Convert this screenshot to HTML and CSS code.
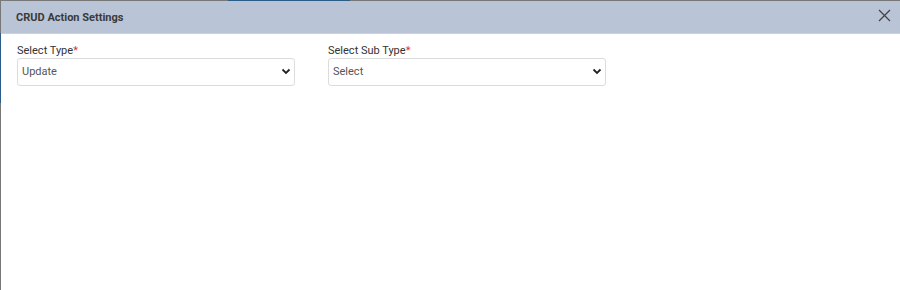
FILE: index.html
```html
<!DOCTYPE html>
<html lang="en">
<head>
  <meta charset="UTF-8">
  <meta name="viewport" content="width=device-width, initial-scale=1.0">
  <title>CRUD Action Settings</title>
  <link rel="stylesheet" href="styles.css">
</head>
<body>
  <!-- page behind the modal -->
  <div class="backdrop">
    <div class="tab-active"></div>
    <div class="side-active"></div>
  </div>

  <div id="modal">
    <div id="modal-header">
      <h1>CRUD Action Settings</h1>
      <button class="close" aria-label="Close">
        <svg width="13" height="13" viewBox="0 0 13 13">
          <path d="M1 1 L12 12 M12 1 L1 12" stroke="#444" stroke-width="1.3" fill="none"/>
        </svg>
      </button>
    </div>
    <div id="modal-body">
      <div class="field">
        <label>Select Type<span class="req">*</span></label>
        <div class="select">
          <span>Update</span>
          <svg width="10" height="7" viewBox="0 0 10 7"><path d="M1.5 1.5 L5 5 L8.5 1.5" stroke="#222" stroke-width="1.8" fill="none"/></svg>
        </div>
      </div>
      <div class="field">
        <label>Select Sub Type<span class="req">*</span></label>
        <div class="select">
          <span>Select</span>
          <svg width="10" height="7" viewBox="0 0 10 7"><path d="M1.5 1.5 L5 5 L8.5 1.5" stroke="#222" stroke-width="1.8" fill="none"/></svg>
        </div>
      </div>
    </div>
  </div>
</body>
</html>
```

FILE: styles.css
```css
body {
  margin: 0;
  font-family: Roboto, "Liberation Sans", Arial, sans-serif;
  background: #787878;
  height: 290px;
  overflow: hidden;
  position: relative;
}

.backdrop {
  position: absolute;
  inset: 0;
}

.tab-active {
  position: absolute;
  top: 0;
  left: 228px;
  width: 122px;
  height: 1px;
  background: #2c5d88;
}

.side-active {
  position: absolute;
  top: 33px;
  left: 0;
  width: 1px;
  height: 70px;
  background: #2c5d88;
}

#modal {
  position: absolute;
  top: 1px;
  left: 1px;
  right: 0;
  bottom: 0;
  background: #fff;
  display: flex;
  flex-direction: column;
}

#modal-header {
  display: flex;
  justify-content: space-between;
  align-items: center;
  height: 32px;
  padding: 0 9px 0 15px;
  background: #b9c5d6;
  border-bottom: 1px solid #c9d3e0;
}

#modal-header h1 {
  margin: 0;
  font-size: 11px;
  font-weight: 700;
  color: #3a3a3a;
  padding-top: 1px;
}

.close {
  border: none;
  background: transparent;
  padding: 0;
  margin-top: -3px;
  display: flex;
  cursor: pointer;
}

#modal-body {
  display: flex;
  gap: 33px;
  padding: 10px 16px;
}

.field {
  width: 278px;
  display: flex;
  flex-direction: column;
  gap: 0;
}

.field label {
  font-size: 11px;
  color: #333;
  line-height: 14px;
}

.req {
  color: #e5322d;
}

.select {
  height: 26px;
  border: 1px solid #dcdcdc;
  border-radius: 3px;
  display: flex;
  align-items: center;
  justify-content: space-between;
  padding: 0 3px 0 4px;
  font-size: 11px;
  color: #555;
}

.select span {
  margin-top: -2px;
}

.select svg {
  margin-top: -1px;
}
```
